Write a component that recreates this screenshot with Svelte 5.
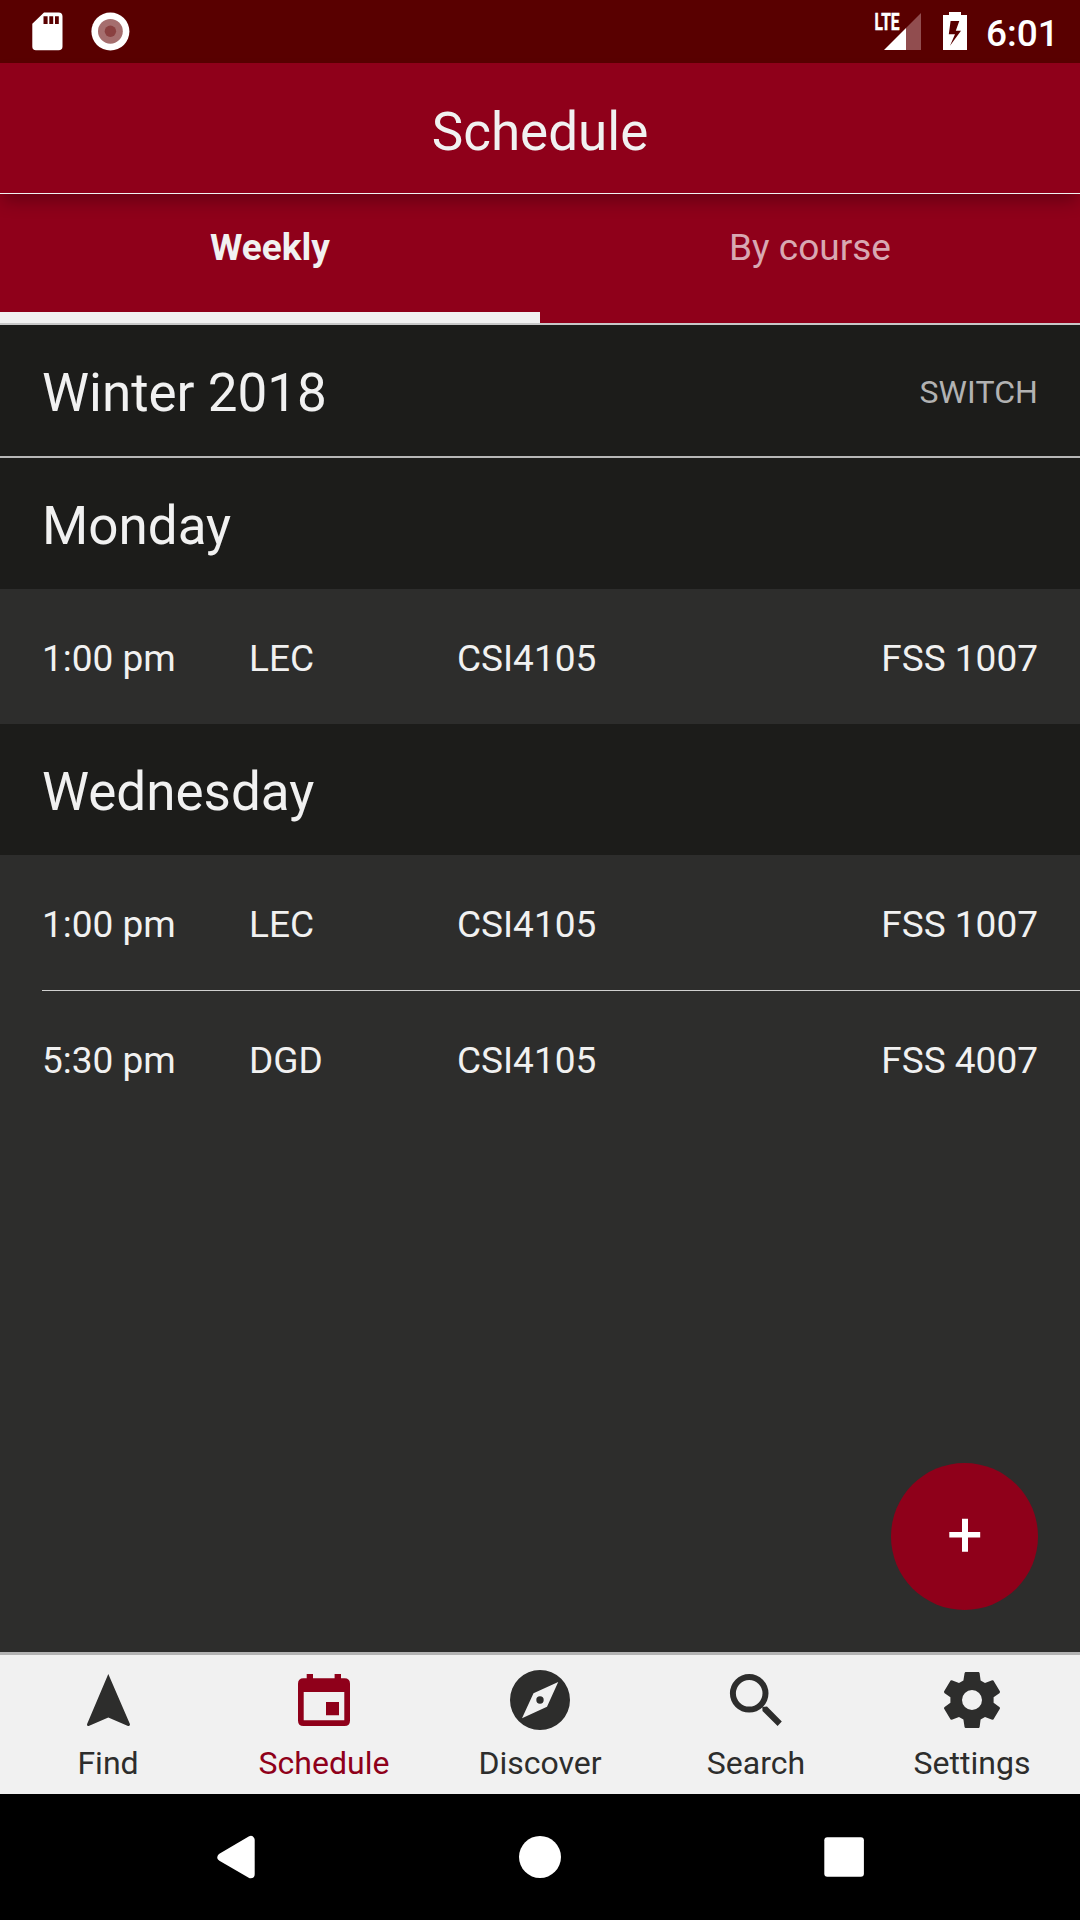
<script lang="ts">
  const days = [
    { name: 'Monday', events: [{ time: '1:00 pm', kind: 'LEC', course: 'CSI4105', room: 'FSS 1007' }] },
    {
      name: 'Wednesday',
      events: [
        { time: '1:00 pm', kind: 'LEC', course: 'CSI4105', room: 'FSS 1007' },
        { time: '5:30 pm', kind: 'DGD', course: 'CSI4105', room: 'FSS 4007' }
      ]
    }
  ];

  const tabs = [
    { label: 'Find', icon: 'M30.3 4 L52 54.3 Q52 56.5 50 56 L30.3 47.5 L10.7 56 Q8.7 56.5 9 54.3 Z' },
    {
      label: 'Schedule',
      active: true,
      icon: 'M12.7 4 H19 V8.3 H40.6 V4 H47 V8.3 H50.5 Q56 8.3 56 13.8 V50.5 Q56 56 50.5 56 H9.5 Q4 56 4 50.5 V13.8 Q4 8.3 9.5 8.3 H12.7 Z M9.7 22 V50.2 H50.3 V22 Z M32 32 H45 V45.2 H32 Z'
    },
    {
      label: 'Discover',
      icon: 'M30 0 A30 30 0 1 1 30 60 A30 30 0 1 1 30 0 Z M23.5 23.3 L12 48.3 L37 36.7 L48.2 12 Z M30 26.3 A3.7 3.7 0 1 0 30 33.7 A3.7 3.7 0 1 0 30 26.3 Z'
    },
    {
      label: 'Search',
      icon: 'M23.2 4 A19.3 19.3 0 1 1 23.2 42.6 A19.3 19.3 0 1 1 23.2 4 Z M23.2 10 A13.3 13.3 0 1 0 23.2 36.6 A13.3 13.3 0 1 0 23.2 10 Z M36.3 37 L41 36.5 L55.8 51.6 L51.6 56 L36.5 41 Z'
    },
    {
      label: 'Settings',
      icon: 'M23.4 2 H36.8 L37.6 3 L38.6 10.4 L43 13 L50.2 10.2 L51.4 10.6 L58 21.6 L57.7 22.9 L51.6 27.2 V32.8 L57.7 37.2 L58 38.4 L51.4 49.6 L50.2 49.8 L43 47 L38.6 49.6 L37.6 57.2 L36.8 58 H23.4 L22.6 57.2 L21.4 49.6 L17 47 L9.8 49.8 L8.6 49.6 L2 38.4 L2.3 37.2 L8.4 32.8 V27.2 L2.3 22.9 L2 21.6 L8.6 10.6 L9.8 10.2 L17 13 L21.4 10.4 L22.6 3 Z M30 20 A10 10 0 1 0 30 40 A10 10 0 1 0 30 20 Z'
    }
  ];
</script>

<div class="screen">
  <div class="status">
    <svg class="left" width="110" height="63" viewBox="0 0 110 63">
      <path fill="#fff" fill-rule="evenodd" d="M12 12.5 H26.5 Q30.5 12.5 30.5 16.5 V46.5 Q30.5 50.3 26.5 50.3 H4 Q.3 50.3 .3 46.5 V23.8 Z M11.5 16.3 V24 H15.6 V16.3 Z M17.3 16.3 V24 H21.2 V16.3 Z M23 16.3 V24 H26.8 V16.3 Z" />
      <circle cx="78.4" cy="31.5" r="19" fill="#fff" />
      <circle cx="78.4" cy="31.3" r="12.4" fill="#a56e6e" />
      <circle cx="78.4" cy="31.3" r="5.7" fill="#8a4040" />
    </svg>
    <svg class="right" width="100" height="63" viewBox="0 0 100 63">
      <text class="lte" x="4.5" y="30" textLength="25" lengthAdjust="spacingAndGlyphs">LTE</text>
      <path fill="#fff" d="M14 50 L36 28 V50 Z" />
      <path fill="#914d4f" d="M36 28 L51 13 V50 H36 Z" />
      <path fill="#fff" fill-rule="evenodd" d="M79 12 H91 V15 H97 V50 H73 V15 H79 Z M80.6 21 L78.8 34.3 H85 L80 45.8 L91 30.7 H85.8 L89.3 21 Z" />
    </svg>
    <span class="clock">6:01</span>
  </div>

  <header><h1>Schedule</h1></header>

  <div class="switcher">
    <div class="tab selected">Weekly</div>
    <div class="tab">By course</div>
  </div>

  <div class="heading term">
    <span>Winter 2018</span>
    <span class="switch">SWITCH</span>
  </div>

  <main>
    {#each days as day}
      <h2 class="heading">{day.name}</h2>
      <ul>
        {#each day.events as event}
          <li>
            <span>{event.time}</span>
            <span>{event.kind}</span>
            <span>{event.course}</span>
            <span>{event.room}</span>
          </li>
        {/each}
      </ul>
    {/each}
    <button class="fab" aria-label="Add">
      <svg width="32" height="34" viewBox="0 0 32 34">
        <path fill="#fff" d="M13 .7 H19 V14 H31.2 V19.6 H19 V33.7 H13 V19.6 H.3 V14 H13 Z" />
      </svg>
    </button>
  </main>

  <nav>
    {#each tabs as tab}
      <div class="item" class:active={tab.active}>
        <svg width="60" height="60" viewBox="0 0 60 60">
          <path fill="currentColor" fill-rule="evenodd" d={tab.icon} />
        </svg>
        <span>{tab.label}</span>
      </div>
    {/each}
  </nav>

  <div class="system">
    <svg width="126" height="126" viewBox="0 0 126 126">
      <path fill="#fff" stroke="#fff" stroke-width="8" stroke-linejoin="round" d="M48.4 63.3 L77.7 46 V80.2 Z" />
    </svg>
    <svg width="126" height="126" viewBox="0 0 126 126"><circle cx="63" cy="63" r="21" fill="#fff" /></svg>
    <svg width="126" height="126" viewBox="0 0 126 126"><rect x="43.3" y="43.2" width="39.6" height="39.6" rx="3" fill="#fff" /></svg>
  </div>
</div>

<style>
  :global(body) {
    margin: 0;
    background: #2d2d2c;
  }
  .screen {
    box-sizing: border-box;
    display: flex;
    flex-direction: column;
    width: 1080px;
    height: 1920px;
    overflow: hidden;
    background: #2d2d2c;
    color: #f1f1f1;
    font-family: Roboto, sans-serif;
    font-size: 37px;
  }
  .screen * {
    box-sizing: border-box;
  }
  svg {
    display: block;
    flex: none;
  }
  .status {
    display: flex;
    flex: none;
    align-items: center;
    height: 63px;
    padding: 0 26px 0 32px;
    background: #590000;
    color: #fff;
  }
  .right {
    margin-left: auto;
  }
  .lte {
    fill: #fff;
    stroke: #fff;
    stroke-width: 0.5px;
    font-size: 23px;
    font-weight: 700;
  }
  .clock {
    width: 68px;
    margin-left: 16px;
    padding-top: 4px;
    font-weight: 500;
    text-align: left;
    white-space: nowrap;
  }
  header {
    position: relative;
    z-index: 1;
    display: flex;
    flex: none;
    align-items: center;
    justify-content: center;
    height: 131px;
    padding-top: 8px;
    border-bottom: 1px solid #f1f1f1;
    background: #8f001a;
    box-shadow: 0 10px 16px -3px rgba(0, 0, 0, 0.28);
  }
  h1,
  h2 {
    margin: 0;
    font-size: 53px;
    font-weight: 400;
  }
  .switcher {
    display: flex;
    flex: none;
    height: 131px;
    border-bottom: 2px solid #c8c8c8;
    background: #8f001a;
  }
  .tab {
    display: flex;
    flex: 1;
    align-items: center;
    justify-content: center;
    padding-bottom: 11px;
    border-bottom: 11px solid transparent;
    color: #d8a8b2;
  }
  .tab.selected {
    border-color: #f1f1f1;
    color: #f1f1f1;
    font-weight: 700;
  }
  .heading {
    display: flex;
    flex: none;
    align-items: center;
    justify-content: space-between;
    height: 131px;
    padding: 5px 42px 0;
    background: #1c1c1a;
    font-size: 53px;
  }
  .term {
    height: 133px;
    border-bottom: 2px solid #b7b7b7;
  }
  .switch {
    padding-bottom: 2px;
    color: #b2b2b2;
    font-size: 32px;
    letter-spacing: 0.1px;
  }
  main {
    position: relative;
    flex: 1;
  }
  ul {
    margin: 0;
    padding: 0 0 0 42px;
    list-style: none;
  }
  li {
    display: grid;
    grid-template-columns: 207px 208px 1fr auto;
    align-items: center;
    height: 135px;
    padding: 4px 42px 0 0;
  }
  li + li {
    height: 136px;
    border-top: 1px solid #d0d0d0;
  }
  .fab {
    position: absolute;
    right: 42px;
    bottom: 42px;
    display: flex;
    align-items: center;
    justify-content: center;
    width: 147px;
    height: 147px;
    padding: 0 0 3px;
    border: 0;
    border-radius: 50%;
    background: #8f001a;
  }
  nav {
    display: flex;
    flex: none;
    height: 142px;
    border-top: 3px solid #b3b3b3;
    background: #f1f1f1;
    color: #2d2d2c;
    font-size: 32px;
  }
  .item {
    display: flex;
    flex: 1;
    flex-direction: column;
    align-items: center;
    padding-top: 15px;
  }
  .item span {
    margin-top: 14px;
    line-height: 38px;
  }
  .active {
    color: #8f001a;
  }
  .system {
    display: flex;
    flex: none;
    align-items: center;
    justify-content: center;
    gap: 178px;
    height: 126px;
    background: #000;
  }
</style>
